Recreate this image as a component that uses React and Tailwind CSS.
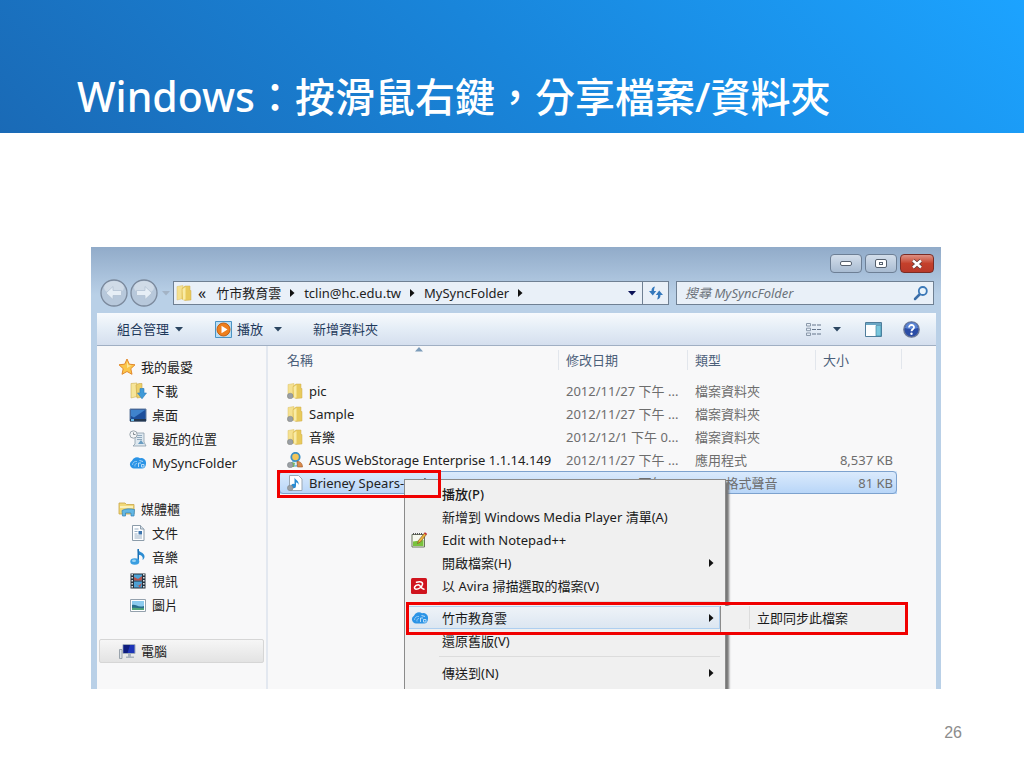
import React, { useState } from "react";

const FolderIcon = ({ locked }) => (
    <svg width="16" height="16" viewBox="0 0 16 16" aria-hidden="true">
        <path d="M1 1.5 7 .5v13L1 15z" fill="#f5e190" stroke="#dcc068" strokeWidth=".5" />
        <path d="M6 3.500 9 1h5v4.500h1v9.500L9 15.500 6 14z" fill="#e8ca5c" stroke="#d0ad4c" strokeWidth=".5" />
        <path d="M6.500 4 9.500 2v12.500L7 15z" fill="#f9eba6" />
        {locked && <circle cx="3.2" cy="13" r="2.8" fill="#9a9fa4" stroke="#7d8287" strokeWidth=".5" />}
    </svg>
);

const StarIcon = () => (
    <svg width="18" height="18" viewBox="0 0 18 18" aria-hidden="true">
        <path d="m9 1 2.3 5.2 5.7.6-4.200 3.900 1.200 5.600L9 13.500 4 16.300l1.200-5.600L1 6.800l5.700-.6z" fill="#fbc64a" stroke="#e2892c" strokeLinejoin="round" />
        <path d="m9 3.500 1.500 3.700 3 .4L9 10z" fill="#fde89a" />
    </svg>
);

const DownloadIcon = () => (
    <svg width="18" height="18" viewBox="0 0 18 18" aria-hidden="true">
        <path d="M2 1.500 8 1v13.500L2 16z" fill="#f6e599" stroke="#cfae50" strokeWidth=".6" />
        <path d="M7 3 10 1.500h3v5h1v8.500L8 16z" fill="#ecd06a" stroke="#c9a548" strokeWidth=".6" />
        <path d="M11 6.500h4v4.500h2.500L13 16.800 8.500 11H11z" fill="#3f9ad8" stroke="#2a7dc0" strokeWidth=".6" />
    </svg>
);

const DesktopIcon = () => (
    <svg width="18" height="18" viewBox="0 0 18 18" aria-hidden="true">
        <path d="M1 3h16v12H1z" fill="#1d4f9b" stroke="#667e9e" />
        <path d="M2 4h14L5 11.500 2 10z" fill="#3f83cc" />
        <path d="M1 13h16v2.500H1z" fill="#24374f" />
        <path d="M2 13h3v2H2z" fill="#69b9e8" />
    </svg>
);

const RecentIcon = () => (
    <svg width="18" height="18" viewBox="0 0 18 18" aria-hidden="true">
        <path d="M6 3h9v9l2 4H4l2-2z" fill="#dfe9f0" stroke="#8b9dab" strokeWidth=".8" />
        <path d="M8 5.500h5M8 7.500h5M8 9.500h5" stroke="#8fa9bd" />
        <path d="m9 14 3-4 3 4z" fill="#6a9cc0" />
        <circle cx="4.500" cy="4.500" r="3.700" fill="#f3f5f6" stroke="#9aa5ad" />
        <path d="M4.500 2.500v2H6.500" fill="none" stroke="#68727a" strokeWidth=".8" />
    </svg>
);

const CloudIcon = () => (
    <svg width="18" height="18" viewBox="0 0 18 18" aria-hidden="true">
        <path d="M5 14.500a4.200 4.200 0 0 1-2-7.800A5.200 5.200 0 0 1 11 4.200 4.800 4.800 0 0 1 17 9.500c0 3-1.500 5-4 5z" fill="#2b94e6" />
        <path d="M3.500 11c0-2.500 2-4 4.500-3.500M6 12.500c-.5-2 .5-3 2-3" fill="none" stroke="#8dc8f6" strokeWidth="1" />
        <path d="M9.500 13V9h2.500M12.500 10.500h2.500v2.500h-2.500zM10.500 6.500l3.500 1" fill="none" stroke="#c3e2fb" strokeWidth=".9" />
    </svg>
);

const LibraryIcon = () => (
    <svg width="18" height="18" viewBox="0 0 18 18" aria-hidden="true">
        <path d="M1 3h6l1.500 1.500H16V14H1z" fill="#f1d979" stroke="#c9a548" strokeWidth=".8" />
        <path d="M2 6h13v2H2z" fill="#fbf0b9" />
        <path d="M4 10.500c3-2 9-2 12.500-1l-.5 6.500h-3v-3H7.500v3h-3z" fill="#63b7e4" stroke="#3180b5" strokeWidth=".7" />
    </svg>
);

const DocumentIcon = () => (
    <svg width="18" height="18" viewBox="0 0 18 18" aria-hidden="true">
        <path d="M3.500 1.500h8l3.500 3.500v11.500H3.500z" fill="#fdfeff" stroke="#8c9caa" />
        <path d="M11.500 1.500V5H15" fill="#d5e0e9" stroke="#8c9caa" />
        <path d="M5.500 5h4M5.500 7.500h3M5.500 10h3M5.500 12h7.500M5.500 14h7.500" stroke="#9bb0c4" />
        <path d="M9.500 7h3.500v3.500H9.500z" fill="#3c74ad" />
    </svg>
);

const NoteIcon = () => (
    <svg width="18" height="18" viewBox="0 0 18 18" aria-hidden="true">
        <path d="M8.500 1c.5 3 6.500 3 7 7 .2 2-1 3.500-2 4 1-3-1-5-3.500-5V13z" fill="#2b8cd2" />
        <path d="M8.500 1H10v12H8.500z" fill="#1b70b4" />
        <ellipse cx="5.800" cy="13.500" rx="4.500" ry="3.300" fill="#3a9ee0" />
        <ellipse cx="5" cy="12.700" rx="2" ry="1.200" fill="#9ad4f5" />
    </svg>
);

const VideoIcon = () => (
    <svg width="18" height="18" viewBox="0 0 18 18" aria-hidden="true">
        <path d="M1.500 1.500h15v15h-15z" fill="#26323d" />
        <path d="M5 2.500h8v6H5zM5 9.500h8v6H5z" fill="#4ea3d6" />
        <path d="m5 5 4 2 4-3v4.500H5zM6 11l3 3 4-3-2 4.500z" fill="#b7544f" />
        <path d="M3.200 2v14M14.800 2v14" stroke="#e5ebef" strokeWidth="1.500" strokeDasharray="1.500 1.500" />
    </svg>
);

const PictureIcon = () => (
    <svg width="18" height="18" viewBox="0 0 18 18" aria-hidden="true">
        <path d="M1.500 3.500h15v12h-15z" fill="#fff" stroke="#94a1ad" />
        <path d="M3 5h12v9H3z" fill="#8ccbee" />
        <path d="M3 9c4-1 6 3 12 1v4H3z" fill="#286e8d" />
        <path d="M3 12c4-1 8 1 12 0v2H3z" fill="#53a779" />
    </svg>
);

const ComputerIcon = () => (
    <svg width="18" height="18" viewBox="0 0 18 18" aria-hidden="true">
        <path d="M5 2.500h12v9H5z" fill="#1e35b8" stroke="#a1adba" />
        <path d="M5.500 3H12l-2.500 8h-4z" fill="#0e1d7d" />
        <path d="M10 12h3v2.500h3V16H8v-1.500h2z" fill="#aab4be" />
        <path d="M1.500 7.500h2.500v9H1.500z" fill="#dce2e7" stroke="#87929c" strokeWidth=".8" />
    </svg>
);

const InstallerIcon = () => (
    <svg width="16" height="16" viewBox="0 0 16 16" aria-hidden="true">
        <circle cx="8.500" cy="5" r="4.200" fill="#f3c65a" stroke="#3d8fc4" strokeWidth="1.800" />
        <path d="M4.500 10.500c2-1.500 5-1.500 7 0L10 14H6z" fill="#d9eefa" stroke="#459fd3" />
        <path d="M10 9.500c3-.5 5.500 2 5.500 5.500h-5z" fill="#d98a4a" stroke="#9f5527" strokeWidth=".6" />
        <path d="M4.500 10 8 11l-1 4H4z" fill="#7ab85f" />
        <circle cx="3.200" cy="13" r="2.800" fill="#9a9fa4" stroke="#7d8287" strokeWidth=".5" />
    </svg>
);

const AudioFileIcon = () => (
    <svg width="16" height="16" viewBox="0 0 16 16" aria-hidden="true">
        <path d="M2.500.5h9l3.500 3.500v11.500H2.500z" fill="#fff" stroke="#9aa7b4" />
        <path d="M7.500 2.500c.5 2.500 5 3 4 7.500-.5-2-1.500-2.500-2.500-2.500V11a2.500 2.200 0 1 1-1.500-2z" fill="#2b8cd2" />
        <circle cx="3.200" cy="13" r="2.800" fill="#9a9fa4" stroke="#7d8287" strokeWidth=".5" />
    </svg>
);

const NotepadIcon = () => (
    <svg width="16" height="16" viewBox="0 0 16 16" aria-hidden="true">
        <path d="M1 2.500h12.500V15H1z" fill="#f6f8ee" stroke="#6a755c" />
        <path d="M2 9.500 12.500 8v6H2z" fill="#79c23d" />
        <path d="M2 2h10" stroke="#555" strokeWidth="2" strokeDasharray="1 1" />
        <path d="m6.500 11.500 1-3L13.500 1l2 1.500-6 7.500z" fill="#e9b53d" stroke="#7b4a23" strokeWidth=".6" />
        <path d="m13 1.500 1-1.200 2 1.500-1 1.200z" fill="#c82c34" />
    </svg>
);

const AviraIcon = () => (
    <svg width="16" height="16" viewBox="0 0 16 16" aria-hidden="true">
        <rect width="16" height="16" rx="1.500" fill="#d0141e" />
        <path d="M5.500 4.300c3.500-1.300 6.500-.3 6 2-.6 2.600-3.500 4.900-6.500 4.900-2.800-.4-1.500-4.200 2.300-4.400 2.200 0 2.200 3.900 5.700 4.400" fill="none" stroke="#fff" strokeWidth="1.500" strokeLinecap="round" />
    </svg>
);

const PlayIcon = () => (
    <svg width="17" height="17" viewBox="0 0 17 17" aria-hidden="true">
        <path d="M.5.5h16v16H.5z" fill="#b9def4" stroke="#4b93c4" />
        <circle cx="8.500" cy="8.500" r="6.500" fill="#ee7f1d" stroke="#c65f10" />
        <path d="m6.500 4.800 6 3.700-6 3.700z" fill="#fff" />
    </svg>
);

const RefreshIcon = () => (
    <svg width="16" height="16" viewBox="0 0 16 16" fill="#3579bd" aria-hidden="true">
        <path d="M7 1.500C4.500 1.800 3.500 3.500 3.500 6H1l3.800 4.500L8.200 6H6c0-1.500.2-3 1-4.500z" />
        <path d="M9 14.500c2.500-.3 3.500-2 3.500-4.500H15l-3.800-4.500L7.800 10H10c0 1.500-.2 3-1 4.500z" />
    </svg>
);

const SearchIcon = () => (
    <svg width="16" height="16" viewBox="0 0 16 16" fill="none" aria-hidden="true">
        <path d="m2 14 5-5" stroke="#3b6ea8" strokeWidth="2.500" strokeLinecap="round" />
        <circle cx="9.800" cy="6" r="4" fill="#eaf4fc" stroke="#3b78b8" strokeWidth="1.800" />
    </svg>
);

const ViewIcon = () => (
    <svg width="17" height="13" viewBox="0 0 17 13" fill="none" aria-hidden="true">
        <path d="M1.500.5h4v2.500h-4zM1.500 5.200h4v2.500h-4zM1.500 10h4v2.500h-4z" stroke="#8b99aa" />
        <path d="M7 2h9M7 6.500h9M7 11h9" stroke="#65758a" strokeDasharray="4 1" />
    </svg>
);

const PaneIcon = () => (
    <svg width="17" height="15" viewBox="0 0 17 15" aria-hidden="true">
        <path d="M.5.5h16v14H.5z" fill="#fdfefe" stroke="#4f7d9b" />
        <path d="M1 1h15v2H1z" fill="#6aa6c4" />
        <path d="M11 3.500h5v10.500h-5z" fill="#79c6dc" stroke="#3f87a5" strokeWidth=".7" />
    </svg>
);

const HelpIcon = () => (
    <svg width="17" height="17" viewBox="0 0 17 17" fill="none" aria-hidden="true">
        <circle cx="8.500" cy="8.500" r="7.700" fill="#2b4da6" stroke="#6b7896" strokeWidth="1.300" />
        <path d="M2 7a6.600 6.600 0 0 1 13 0c-4 1.500-9 1.500-13 0z" fill="#5b85d4" />
        <path d="M6 6.500c0-3.500 5.300-3.200 5 0-.2 1.700-2.500 1.800-2.500 3.700" stroke="#fff" strokeWidth="1.800" />
        <circle cx="8.500" cy="12.700" r="1.200" fill="#fff" />
    </svg>
);

const ArrowButtonIcon = ({ flip }) => (
    <svg width="28" height="28" viewBox="0 0 28 28" className={flip ? "-scale-x-100" : ""} aria-hidden="true">
        <circle cx="14" cy="14" r="13" fill="#b7c8db" stroke="#7b899c" strokeWidth="1.300" />
        <ellipse cx="14" cy="8.500" rx="10" ry="6.500" fill="#d0dbe7" />
        <path d="m6 14 7-6.500v4h8.500v5H13v4z" fill="#e6eef6" stroke="#b3c2d3" strokeWidth=".8" />
    </svg>
);

const DownTriangle = ({ color = "#2b4560" }) => (
    <svg width="8" height="5" viewBox="0 0 8 5" fill={color} aria-hidden="true">
        <path d="M0 0h8L4 4.500z" />
    </svg>
);

const RightTriangle = () => (
    <svg width="5" height="8" viewBox="0 0 5 8" fill="#111" aria-hidden="true">
        <path d="M0 0v8l4.500-4z" />
    </svg>
);

const favorites = [
    { label: "下載", Icon: DownloadIcon },
    { label: "桌面", Icon: DesktopIcon },
    { label: "最近的位置", Icon: RecentIcon },
    { label: "MySyncFolder", Icon: CloudIcon },
];

const libraries = [
    { label: "文件", Icon: DocumentIcon },
    { label: "音樂", Icon: NoteIcon },
    { label: "視訊", Icon: VideoIcon },
    { label: "圖片", Icon: PictureIcon },
];

const files = [
    { name: "pic", date: "2012/11/27 下午 ...", type: "檔案資料夾", size: "", icon: <FolderIcon locked /> },
    { name: "Sample", date: "2012/11/27 下午 ...", type: "檔案資料夾", size: "", icon: <FolderIcon locked /> },
    { name: "音樂", date: "2012/12/1 下午 0...", type: "檔案資料夾", size: "", icon: <FolderIcon locked /> },
    { name: "ASUS WebStorage Enterprise 1.1.14.149", date: "2012/11/27 下午 ...", type: "應用程式", size: "8,537 KB", icon: <InstallerIcon /> },
    { name: "Brieney Spears-toxic", date: "2012/11/27 下午 ...", type: "MP3 格式聲音", size: "81 KB", icon: <AudioFileIcon />, selected: true },
];

const columns = [
    { label: "名稱", width: "w-[279px]" },
    { label: "修改日期", width: "w-[129px]" },
    { label: "類型", width: "w-[128px]" },
    { label: "大小", width: "w-[82px]" },
];

const NavGroup = ({ title, Icon, items }) => (
    <div>
        <a href="#" className="flex h-6 items-center gap-[5px] pl-[21px]">
            <Icon />
            {title}
        </a>
        <ul>
            {items.map((item) => (
                <li key={item.label}>
                    <a href="#" className="flex h-6 items-center gap-[5px] pl-8">
                        <item.Icon />
                        {item.label}
                    </a>
                </li>
            ))}
        </ul>
    </div>
);

const MenuItem = ({ icon, arrow, className = "", children }) => (
    <button type="button" role="menuitem" className={`flex h-[23px] w-full items-center text-left ${className}`}>
        <span className="flex w-[35px] shrink-0 pl-1">{icon}</span>
        <span className="flex-1">{children}</span>
        {arrow && <span className="pr-[6px]"><RightTriangle /></span>}
    </button>
);

const MenuSeparator = () => (
    <div role="separator" className="ml-8 flex h-[9px] items-center">
        <div className="h-px w-full bg-[#dcdcdc]" />
    </div>
);

const ContextMenu = () => (
    <div
        role="menu"
        className="absolute top-[133px] left-[136px] w-[322px] border border-[#8b8b8b] bg-[#f0f0f0] pt-[2px] pr-[5px] pb-3 pl-[2px] text-[#1a1a1a] shadow-[3px_3px_2px_#777]"
    >
        <MenuItem className="font-medium">播放(P)</MenuItem>
        <MenuItem>新增到 Windows Media Player 清單(A)</MenuItem>
        <MenuItem icon={<NotepadIcon />}>Edit with Notepad++</MenuItem>
        <MenuItem arrow>開啟檔案(H)</MenuItem>
        <MenuItem icon={<AviraIcon />}>以 Avira 掃描選取的檔案(V)</MenuItem>
        <MenuSeparator />
        <div className="relative">
            <MenuItem
                icon={<CloudIcon />}
                arrow
                className="bg-linear-to-b from-[#eff3f8] to-[#dbe6f1] outline -outline-offset-1 outline-[#aecff0]"
            >
                竹市教育雲
            </MenuItem>
            {/* Submenu */}
            <div role="menu" className="absolute top-0 left-full h-[26px] w-[186px] border-l border-[#8b8b8b] bg-[#f0f0f0]">
                <button type="button" role="menuitem" className="ml-7 flex h-[23px] items-center border-l border-[#dcdcdc] pl-[7px]">
                    立即同步此檔案
                </button>
            </div>
            <div className="pointer-events-none absolute -top-1 -right-[188px] -left-px h-[33px] border-3 border-[#f00000]" />
        </div>
        <MenuItem>還原舊版(V)</MenuItem>
        <MenuSeparator />
        <MenuItem arrow>傳送到(N)</MenuItem>
    </div>
);

const TitleBar = () => (
    <div className="flex h-[34px] items-start justify-end gap-[3px] pt-[7px] pr-[2px]">
        <button type="button" aria-label="最小化" className="flex h-[19px] w-8 items-center justify-center rounded-sm border border-[#6d7f95] bg-linear-to-b from-[#d3deeb] to-[#a9bcd2]">
            <span className="h-[5px] w-3 rounded-xs border border-[#55606e] bg-white" />
        </button>
        <button type="button" aria-label="最大化" className="flex h-[19px] w-8 items-center justify-center rounded-sm border border-[#6d7f95] bg-linear-to-b from-[#d3deeb] to-[#a9bcd2]">
            <span className="flex h-[9px] w-3 items-center justify-center rounded-xs border border-[#55606e] bg-white">
                <span className="h-[3px] w-1 border border-[#55606e]" />
            </span>
        </button>
        <button type="button" aria-label="關閉" className="flex h-[19px] w-[34px] items-center justify-center rounded-sm border border-[#7a2c25] bg-linear-to-b from-[#dd9083] via-[#c4402b] to-[#b8392a]">
            <svg width="12" height="10" viewBox="0 0 12 10" aria-hidden="true">
                <path d="m2 1.500 8 7M10 1.500l-8 7" stroke="#5e3a38" strokeWidth="4" />
                <path d="m2 1.500 8 7M10 1.500l-8 7" stroke="#fff" strokeWidth="2.500" />
            </svg>
        </button>
    </div>
);

const AddressRow = ({ search, setSearch }) => (
    <div className="flex h-6 items-center pr-[2px]">
        <div className="flex w-[76px] shrink-0 items-center gap-[2px] pl-[3px]">
            <button type="button" aria-label="上一頁"><ArrowButtonIcon /></button>
            <button type="button" aria-label="下一頁"><ArrowButtonIcon flip /></button>
            <button type="button" aria-label="最近的頁面" className="pl-[2px]"><DownTriangle color="#a3b3c5" /></button>
        </div>
        <nav aria-label="位置" className="flex h-6 flex-1 items-center border border-[#6f8093] bg-[#e9f0f8] pl-[2px]">
            <FolderIcon />
            <button type="button" className="pl-[6px] text-base leading-4">«</button>
            <a href="#" className="pl-[10px]">竹市教育雲</a>
            <span className="px-[9px]"><RightTriangle /></span>
            <a href="#">tclin@hc.edu.tw</a>
            <span className="px-[9px]"><RightTriangle /></span>
            <a href="#">MySyncFolder</a>
            <span className="flex-1 px-[9px]"><RightTriangle /></span>
            <button type="button" aria-label="先前的位置" className="px-[6px]"><DownTriangle color="#0b1257" /></button>
            <button type="button" aria-label="重新整理" className="flex h-full w-[26px] items-center justify-center border-l border-[#6f8093]">
                <RefreshIcon />
            </button>
        </nav>
        <div className="ml-[7px] flex h-6 w-[258px] items-center border border-[#6f8093] bg-[#e9f0f8] pr-1 pl-2">
            <input
                type="text"
                aria-label="搜尋"
                placeholder="搜尋 MySyncFolder"
                className="min-w-0 flex-1 bg-transparent italic outline-none placeholder:text-[#6c737b]"
                value={search}
                onChange={(e) => setSearch(e.target.value)}
            />
            <SearchIcon />
        </div>
    </div>
);

const Toolbar = () => (
    <div className="mt-2 flex h-[33px] items-center border-b border-[#a0afc3] bg-linear-to-b from-[#f7fafd] via-[#e4edf6] to-[#d5dfee] pr-4 pl-5 text-[#1e395b]">
        <button type="button" className="flex w-[98px] items-center gap-[6px]">
            組合管理 <DownTriangle />
        </button>
        <button type="button" className="flex w-[98px] items-center gap-[5px]">
            <PlayIcon /> 播放
            <span className="pl-[6px]"><DownTriangle /></span>
        </button>
        <button type="button">新增資料夾</button>
        <div className="ml-auto flex items-center">
            <button type="button" aria-label="變更檢視" className="flex items-center gap-[11px]">
                <ViewIcon /> <DownTriangle />
            </button>
            <button type="button" aria-label="預覽窗格" className="ml-6"><PaneIcon /></button>
            <button type="button" aria-label="說明" className="ml-[21px]"><HelpIcon /></button>
        </div>
    </div>
);

const FileTable = () => (
    <table className="ml-[11px] w-[618px] table-fixed border-collapse">
        <thead>
            <tr className="h-[33px] text-[#4c607a]">
                {columns.map((col, i) => (
                    <th key={col.label} className={`${col.width} p-0 pb-[6px] text-left font-normal`}>
                        <div className={i === 0 ? "pl-2" : "border-l border-[#e2e6ec] pl-[7px]"}>{col.label}</div>
                    </th>
                ))}
            </tr>
        </thead>
        <tbody>
            {files.map((file) => (
                <tr
                    key={file.name}
                    className={`h-[23px] text-[#6d6d6d] ${file.selected ? "rounded-sm bg-linear-to-b from-[#dcebfc] to-[#b7d5f8] outline -outline-offset-1 outline-[#7da2ce]" : ""}`}
                >
                    <td className="p-0 pl-2">
                        <div className="flex items-center gap-[6px] whitespace-nowrap text-[#222]">
                            {file.icon}
                            {file.name}
                        </div>
                    </td>
                    <td className="p-0 pl-2 whitespace-nowrap">{file.date}</td>
                    <td className="p-0 pl-2 whitespace-nowrap">{file.type}</td>
                    <td className="p-0 pr-1 text-right whitespace-nowrap">{file.size}</td>
                </tr>
            ))}
        </tbody>
    </table>
);

const ExplorerWindow = () => {
    const [search, setSearch] = useState("");

    return (
        <section className="overflow-hidden bg-[#b9d0e7] bg-linear-to-b from-[#91abc9] to-[#b9d0e7] to-[48px] pr-[5px] pl-[6px] text-[13px] leading-5 text-[#222]">
            <TitleBar />
            <AddressRow search={search} setSearch={setSearch} />
            <Toolbar />
            <div className="flex bg-[#f8f8f9]">
                {/* Navigation pane */}
                <aside className="flex w-[171px] shrink-0 flex-col gap-[22px] border-r-2 border-[#e3e8f0] pt-[9px] pb-[26px]">
                    <NavGroup title="我的最愛" Icon={StarIcon} items={favorites} />
                    <NavGroup title="媒體櫃" Icon={LibraryIcon} items={libraries} />
                    <a href="#" className="mr-[2px] ml-[2px] flex h-6 items-center gap-[5px] rounded-xs border border-[#d6d6d6] bg-linear-to-b from-[#f6f6f6] to-[#e3e3e3] pl-[18px]">
                        <ComputerIcon />
                        電腦
                    </a>
                </aside>
                <div className="relative min-w-0 flex-1">
                    <FileTable />
                    <div className="absolute top-[3px] left-[633px] h-5 w-px bg-[#e2e6ec]" />
                    <svg width="8" height="5" viewBox="0 0 8 5" fill="#7c9cba" className="absolute top-[1px] left-[147px]" aria-hidden="true">
                        <path d="M4 0 8 4.500H0z" />
                    </svg>
                    <ContextMenu />
                    <div className="pointer-events-none absolute top-[124px] left-[9px] h-7 w-[164px] border-3 border-[#f00000]" />
                </div>
            </div>
        </section>
    );
};

const App = () => {
    return (
        <div className="min-h-screen bg-white font-['Noto_Sans','Noto_Sans_CJK_TC',sans-serif]">
            <header className="bg-linear-[45deg] from-[#1a6ab6] via-[#1985da] to-[#1ca3ff] px-[77px] pt-[72px] pb-3">
                <h1 className="text-[40px] leading-12 font-medium text-white">
                    <span className="text-[41px]">Windows</span>：按滑鼠右鍵，分享檔案/資料夾
                </h1>
            </header>
            <main className="pt-[114px] pr-[83px] pl-[91px]">
                <ExplorerWindow />
            </main>
            <footer className="px-[62px] pt-8 pb-6 text-right font-['Liberation_Sans',sans-serif] text-base text-[#8c8c8c]">
                26
            </footer>
        </div>
    );
};

export default App;
